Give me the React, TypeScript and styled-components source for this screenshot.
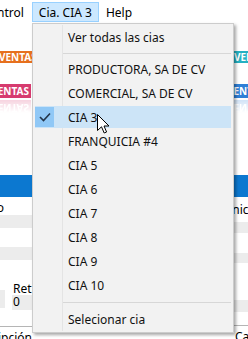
import React from "react";
import styled, { createGlobalStyle } from "styled-components";

const GlobalStyle = createGlobalStyle`
  html, body { margin: 0; padding: 0; background: #fff; }
  body { font-family: "Noto Sans", "Segoe UI", sans-serif; }
`;

const Page = styled.div`
  position: relative;
  width: 248px;
  height: 339px;
  overflow: hidden;
  background: #fff;
  font-size: 12px;
  color: #000;
`;

const MenuBar = styled.div`
  display: flex;
  align-items: flex-end;
  height: 22px;
`;

const MenuTitle = styled.div<{ $active?: boolean; $clip?: boolean }>`
  box-sizing: border-box;
  height: 20px;
  display: flex;
  align-items: center;
  margin-left: ${(p) => (p.$clip ? "-4px" : "0")};
  padding: ${(p) => (p.$clip ? "0 7px 0 0" : "0 6px")};
  border: 1px solid ${(p) => (p.$active ? "#99d1ff" : "transparent")};
  background: ${(p) => (p.$active ? "#cce8ff" : "transparent")};
  white-space: nowrap;
`;

const Content = styled.div`
  display: flex;
  flex-direction: column;
`;

const TileRow = styled.div<{ $top: number; $h: number }>`
  display: flex;
  justify-content: space-between;
  margin-top: ${(p) => p.$top}px;
  height: ${(p) => p.$h}px;
`;

const Tile = styled.div<{ $bg: string; $w: number; $end?: boolean; $shift?: number }>`
  width: ${(p) => p.$w}px;
  height: 100%;
  display: flex;
  align-items: center;
  justify-content: ${(p) => (p.$end ? "flex-end" : "flex-start")};
  padding: ${(p) => (p.$end ? "0 2px 0 0" : "0")};
  box-sizing: border-box;
  overflow: hidden;
  background: ${(p) => p.$bg};
  color: #fff;
  font-weight: 700;
  font-size: 10px;
  white-space: nowrap;
  & > span {
    margin-left: ${(p) => p.$shift ?? 0}px;
  }
`;

const Reflection = styled(Tile)`
  opacity: 0.22;
  transform: scaleY(-1);
  -webkit-mask-image: linear-gradient(to top, #000 0%, transparent 80%);
  mask-image: linear-gradient(to top, #000 0%, transparent 80%);
`;

const BlueBar = styled.div`
  margin-top: 59px;
  height: 22px;
  background: #0c78d0;
`;

const Columns = styled.div`
  display: flex;
  justify-content: space-between;
`;

const Column = styled.div<{ $w: number }>`
  width: ${(p) => p.$w}px;
  display: flex;
  flex-direction: column;
  overflow: hidden;
  font-size: 12px;
`;

const ColLabel = styled.div<{ $h: number; $lh?: number; $shift?: number }>`
  height: ${(p) => p.$h}px;
  line-height: ${(p) => p.$lh ?? p.$h}px;
  white-space: nowrap;
  margin-left: ${(p) => p.$shift ?? 0}px;
`;

const Stripe = styled.div<{ $h: number; $gray?: boolean }>`
  flex: none;
  height: ${(p) => p.$h}px;
  background: ${(p) => (p.$gray ? "#ececec" : "#fff")};
`;

const RetRow = styled.div`
  display: flex;
  align-items: flex-end;
  justify-content: space-between;
  height: 28px;
`;

const FieldStub = styled.div`
  width: 5px;
  height: 18px;
  margin-bottom: 2px;
  background: #ececec;
`;

const RetBlock = styled.div`
  width: 20px;
  display: flex;
  flex-direction: column;
`;

const RetLabel = styled.div`
  height: 13px;
  line-height: 13px;
  padding-left: 1px;
`;

const RetField = styled.div`
  height: 15px;
  line-height: 13px;
  background: #ececec;
  padding-left: 1px;
`;

const Rule = styled.div`
  flex: none;
  height: 1px;
  background: #b5b5b5;
`;

const Dropdown = styled.div`
  position: absolute;
  left: 32px;
  top: 23px;
  width: 202px;
  box-sizing: border-box;
  background: #f2f2f2;
  border: 1px solid #cccccc;
  box-shadow: 2px 2px 3px rgba(0, 0, 0, 0.35);
  padding: 1px 2px;
  display: flex;
  flex-direction: column;
  &::before {
    content: "";
    position: absolute;
    left: 29px;
    top: 1px;
    bottom: 1px;
    width: 1px;
    background: #e4e4e4;
  }
`;

const Item = styled.div<{ $active?: boolean }>`
  position: relative;
  display: flex;
  align-items: center;
  height: 22px;
  margin: 1px 0;
  background: ${(p) => (p.$active ? "#cce4f7" : "transparent")};
  white-space: nowrap;
  color: #111;
`;

const CheckCell = styled.div<{ $checked?: boolean }>`
  width: 19px;
  height: 20px;
  display: flex;
  align-items: center;
  justify-content: center;
  background: ${(p) => (p.$checked ? "#90c8f6" : "transparent")};
`;

const ItemText = styled.span`
  margin-left: 14px;
`;

const Separator = styled.div<{ $h: number }>`
  height: ${(p) => p.$h}px;
  display: flex;
  align-items: center;
  padding-left: 28px;
  &::after {
    content: "";
    flex: 1;
    height: 1px;
    background: #d7d7d7;
  }
`;

const Cursor = styled.svg`
  position: absolute;
  left: 97px;
  top: 114px;
`;

const companies = [
  "PRODUCTORA, SA DE CV",
  "COMERCIAL, SA DE CV",
  "CIA 3",
  "FRANQUICIA #4",
  "CIA 5",
  "CIA 6",
  "CIA 7",
  "CIA 8",
  "CIA 9",
  "CIA 10",
];

export default function App() {
  return (
    <Page>
      <GlobalStyle />
      <MenuBar>
        <MenuTitle $clip>ntrol</MenuTitle>
        <MenuTitle $active>Cia. CIA 3</MenuTitle>
        <MenuTitle>Help</MenuTitle>
      </MenuBar>
      <Content>
        <TileRow $top={29} $h={12}>
          <Tile $bg="#e6701e" $w={44} $shift={-1}>
            <span>VENTAS</span>
          </Tile>
          <Tile $bg="#25b0c2" $w={15} $shift={1}>
            <span>VENTAS</span>
          </Tile>
        </TileRow>
        <TileRow $top={21} $h={14}>
          <Tile $bg="#d63b6f" $w={31} $end>
            <span>VENTAS</span>
          </Tile>
          <Tile $bg="#2f7fd6" $w={14} $shift={-7}>
            <span>VENTAS</span>
          </Tile>
        </TileRow>
        <TileRow $top={2} $h={16}>
          <Reflection $bg="#d63b6f" $w={31} $end>
            <span>VENTAS</span>
          </Reflection>
          <Reflection $bg="#2f7fd6" $w={14} $shift={-7}>
            <span>VENTAS</span>
          </Reflection>
        </TileRow>
        <BlueBar />
        <Columns>
          <Column $w={32}>
            <ColLabel $h={18} $lh={22} $shift={-36}>Código</ColLabel>
            <Stripe $h={13} $gray />
            <Stripe $h={19} />
            <Stripe $h={13} $gray />
            <Stripe $h={22} />
            <RetRow>
              <FieldStub />
              <RetBlock>
                <RetLabel>Ret</RetLabel>
                <RetField>0</RetField>
              </RetBlock>
            </RetRow>
            <Stripe $h={16} />
            <Rule />
            <ColLabel $h={14} $lh={22} $shift={-34}>Descripción</ColLabel>
          </Column>
          <Column $w={14}>
            <ColLabel $h={25} $shift={-20}>Técnica</ColLabel>
            <Stripe $h={11} $gray />
            <Stripe $h={20} />
            <Stripe $h={10} $gray />
            <Stripe $h={37} />
            <Stripe $h={12} $gray />
            <Stripe $h={13} />
            <Rule />
            <ColLabel $h={14} $lh={22} $shift={1}>Cantidad</ColLabel>
          </Column>
        </Columns>
      </Content>

      <Dropdown>
        <Item>
          <CheckCell />
          <ItemText>Ver todas las cias</ItemText>
        </Item>
        <Separator $h={8} />
        {companies.map((c) => (
          <Item key={c} $active={c === "CIA 3"}>
            <CheckCell $checked={c === "CIA 3"}>
              {c === "CIA 3" && (
                <svg width="12" height="10" viewBox="0 0 12 10">
                  <polyline
                    points="1,5 4.5,8.5 11,1.5"
                    fill="none"
                    stroke="#23354a"
                    strokeWidth="1.6"
                  />
                </svg>
              )}
            </CheckCell>
            <ItemText>{c}</ItemText>
          </Item>
        ))}
        <Separator $h={10} />
        <Item>
          <CheckCell />
          <ItemText>Selecionar cia</ItemText>
        </Item>
      </Dropdown>

      <Cursor width="13" height="20" viewBox="0 0 13 20">
        <path
          d="M0.5 0.5 L0.5 16.5 L4.5 12.8 L7.2 19 L9.6 18 L7 12 L12 12 Z"
          fill="#fff"
          stroke="#000"
          strokeWidth="1"
          strokeLinejoin="miter"
        />
      </Cursor>
    </Page>
  );
}
